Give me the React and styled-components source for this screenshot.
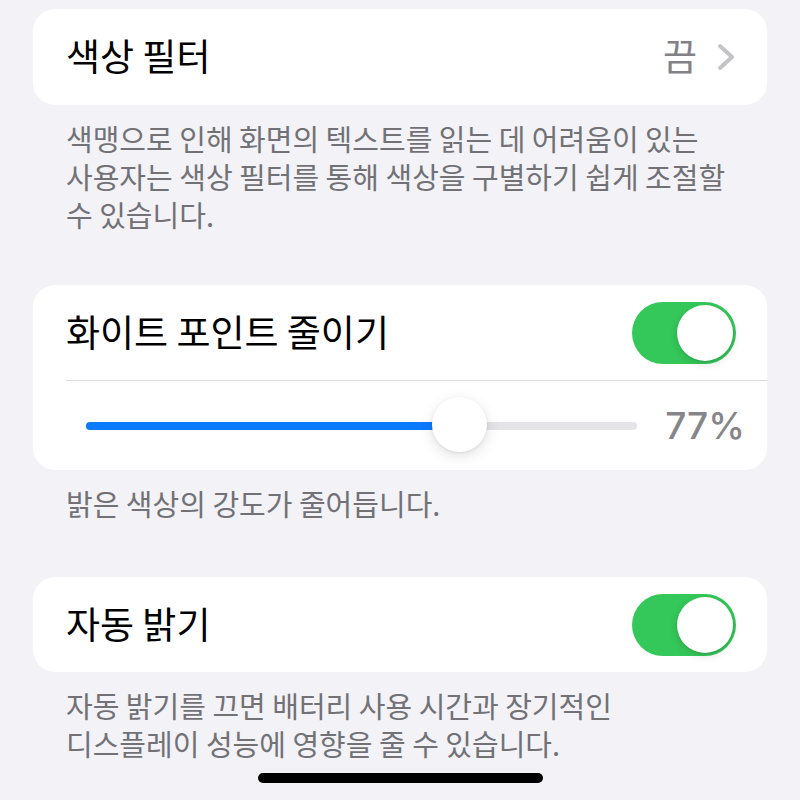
import React from "react";
import styled, { createGlobalStyle } from "styled-components";

const GlobalStyle = createGlobalStyle`
  html, body {
    margin: 0;
    padding: 0;
    background: #f2f2f7;
  }
  body {
    font-family: "Noto Sans CJK KR", "Noto Sans", sans-serif;
    -webkit-font-smoothing: antialiased;
  }
`;

const Page = styled.div`
  width: 800px;
  min-height: 800px;
  box-sizing: border-box;
  padding: 9px 33px 0;
`;

const Card = styled.div`
  background: #ffffff;
  border-radius: 22px;
  overflow: hidden;
`;

const Row = styled.div`
  display: flex;
  align-items: center;
  height: ${(p) => p.height || 96}px;
  padding: 0 32px 0 33px;
`;

const Title = styled.div`
  flex: 1;
  font-size: 37px;
  font-weight: 400;
  color: #000000;
  margin-top: -4px;
`;

const Value = styled.span`
  font-size: 37px;
  color: #828286;
  margin: -4px 20px 0 0;
`;

const Separator = styled.div`
  height: 1px;
  background: #dcdce0;
  margin-left: 33px;
`;

const Footer = styled.p`
  margin: 0;
  padding: 14px 33px ${(p) => p.bottom || 52}px;
  font-size: 29px;
  line-height: 38px;
  color: #717176;
`;

const Switch = styled.div`
  position: relative;
  width: 104px;
  height: 62px;
  border-radius: 31px;
  background: ${(p) => (p.on ? "#34c759" : "#e9e9eb")};
  flex-shrink: 0;
  margin-right: -1px;
`;

const Knob = styled.div`
  position: absolute;
  top: 3px;
  left: ${(p) => (p.on ? 45 : 3)}px;
  width: 56px;
  height: 56px;
  border-radius: 50%;
  background: #ffffff;
  box-shadow: 0 3px 8px rgba(0, 0, 0, 0.12), 0 1px 2px rgba(0, 0, 0, 0.1);
`;

const SliderRow = styled.div`
  display: flex;
  align-items: center;
  height: 89px;
  padding: 0 22px 0 53px;
  gap: 25px;
`;

const Track = styled.div`
  position: relative;
  flex: 1;
  height: 8px;
  border-radius: 4px;
  background: #e3e3e8;
`;

const Fill = styled.div`
  height: 100%;
  border-radius: 4px;
  background: #0a7aff;
`;

const Thumb = styled.div`
  position: absolute;
  top: 50%;
  width: 55px;
  height: 55px;
  margin: -29px 0 0 -27px;
  border-radius: 50%;
  background: #ffffff;
  box-shadow: 0 4px 14px rgba(0, 0, 0, 0.12), 0 1px 3px rgba(0, 0, 0, 0.08);
`;

const Percent = styled.span`
  font-family: Inter, "Noto Sans", sans-serif;
  font-size: 37px;
  font-weight: 500;
  color: #86868a;
  width: 83px;
  text-align: right;
  white-space: nowrap;
`;

const HomeIndicator = styled.div`
  position: fixed;
  left: 258px;
  bottom: 17px;
  width: 285px;
  height: 10px;
  border-radius: 5px;
  background: #000000;
`;

function Chevron() {
  return (
    <svg width="18" height="28" viewBox="0 0 18 28" fill="none">
      <polyline
        points="3,3 15,14 3,25"
        stroke="#c4c4c7"
        strokeWidth="4"
        strokeLinecap="round"
        strokeLinejoin="round"
      />
    </svg>
  );
}

function Toggle({ on }) {
  return (
    <Switch on={on}>
      <Knob on={on} />
    </Switch>
  );
}

function Slider({ value, label }) {
  const pos = `${value * 100}%`;
  return (
    <SliderRow>
      <Track>
        <Fill style={{ width: pos }} />
        <Thumb style={{ left: pos }} />
      </Track>
      <Percent>{label}</Percent>
    </SliderRow>
  );
}

export default function App() {
  return (
    <>
      <GlobalStyle />
      <Page>
        <Card>
          <Row>
            <Title>색상 필터</Title>
            <Value>끔</Value>
            <Chevron />
          </Row>
        </Card>
        <Footer>
          색맹으로 인해 화면의 텍스트를 읽는 데 어려움이 있는
          <br />
          사용자는 색상 필터를 통해 색상을 구별하기 쉽게 조절할
          <br />수 있습니다.
        </Footer>

        <Card>
          <Row height={95}>
            <Title>화이트 포인트 줄이기</Title>
            <Toggle on />
          </Row>
          <Separator />
          <Slider value={0.677} label="77%" />
        </Card>
        <Footer bottom={55}>밝은 색상의 강도가 줄어듭니다.</Footer>

        <Card>
          <Row height={95}>
            <Title>자동 밝기</Title>
            <Toggle on />
          </Row>
        </Card>
        <Footer>
          자동 밝기를 끄면 배터리 사용 시간과 장기적인
          <br />
          디스플레이 성능에 영향을 줄 수 있습니다.
        </Footer>
      </Page>
      <HomeIndicator />
    </>
  );
}
